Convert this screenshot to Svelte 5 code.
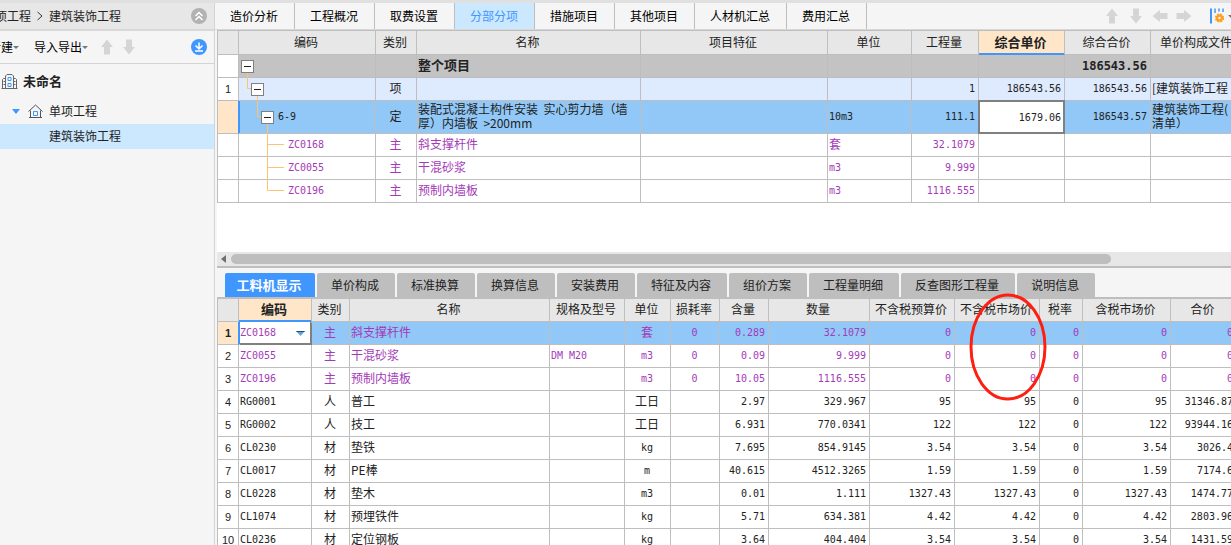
<script lang="ts">
	type Align = 'left' | 'center' | 'right'

	type Column = {
		label: string
		width: number
		align: Align
		active?: boolean
	}

	type BudgetRow = {
		no: string
		kind: 'total' | 'group' | 'selected' | 'material'
		box?: number
		height: number
		lines: string
		code_indent: number
		cells: string[]
	}

	const PAGE_TABS = ['造价分析', '工程概况', '取费设置', '分部分项', '措施项目', '其他项目', '人材机汇总', '费用汇总']
	const DETAIL_TABS = [
		'工料机显示',
		'单价构成',
		'标准换算',
		'换算信息',
		'安装费用',
		'特征及内容',
		'组价方案',
		'工程量明细',
		'反查图形工程量',
		'说明信息',
	]

	let page_tab = $state('分部分项')
	let detail_tab = $state('工料机显示')
	let unit_price = $state('1679.06')

	const BUDGET_COLUMNS: Column[] = [
		{ label: '编码', width: 137, align: 'left' },
		{ label: '类别', width: 41, align: 'center' },
		{ label: '名称', width: 224, align: 'left' },
		{ label: '项目特征', width: 187, align: 'left' },
		{ label: '单位', width: 84, align: 'left' },
		{ label: '工程量', width: 67, align: 'right' },
		{ label: '综合单价', width: 86, align: 'right', active: true },
		{ label: '综合合价', width: 86, align: 'right' },
		{ label: '单价构成文件', width: 93, align: 'left' },
	]
	const PRICE_INDEX = 6

	// box: left edge of the expander, lines: tree connector path inside the code cell
	const BUDGET_ROWS: BudgetRow[] = [
		{
			no: '',
			kind: 'total',
			box: 2,
			height: 22,
			lines: 'M8.5 16V23',
			code_indent: 18,
			cells: ['', '', '整个项目', '', '', '', '', '186543.56', ''],
		},
		{
			no: '1',
			kind: 'group',
			box: 12,
			height: 22,
			lines: 'M8.5 0V10.5H12M18.5 16V23',
			code_indent: 28,
			cells: ['', '项', '', '', '', '1', '186543.56', '186543.56', '[建筑装饰工程'],
		},
		{
			no: '',
			kind: 'selected',
			box: 22,
			height: 32,
			lines: 'M18.5 0V15.5H22M28.5 22V33',
			code_indent: 39,
			cells: [
				'6-9',
				'定',
				'装配式混凝土构件安装\u00a0\u00a0实心剪力墙（墙\n厚）内墙板\u00a0\u00a0>200mm',
				'',
				'10m3',
				'111.1',
				'1679.06',
				'186543.57',
				'建筑装饰工程(\n清单）',
			],
		},
		{
			no: '',
			kind: 'material',
			height: 22,
			lines: 'M28.5 0V23M28.5 10.5H45',
			code_indent: 49,
			cells: ['ZC0168', '主', '斜支撑杆件', '', '套', '32.1079', '', '', ''],
		},
		{
			no: '',
			kind: 'material',
			height: 22,
			lines: 'M28.5 0V23M28.5 10.5H45',
			code_indent: 49,
			cells: ['ZC0055', '主', '干混砂浆', '', 'm3', '9.999', '', '', ''],
		},
		{
			no: '',
			kind: 'material',
			height: 22,
			lines: 'M28.5 0V10.5H45',
			code_indent: 49,
			cells: ['ZC0196', '主', '预制内墙板', '', 'm3', '1116.555', '', '', ''],
		},
	]

	const DETAIL_COLUMNS: Column[] = [
		{ label: '编码', width: 73, align: 'left', active: true },
		{ label: '类别', width: 38, align: 'center' },
		{ label: '名称', width: 200, align: 'left' },
		{ label: '规格及型号', width: 75, align: 'left' },
		{ label: '单位', width: 46, align: 'center' },
		{ label: '损耗率', width: 49, align: 'center' },
		{ label: '含量', width: 49, align: 'right' },
		{ label: '数量', width: 101, align: 'right' },
		{ label: '不含税预算价', width: 85, align: 'right' },
		{ label: '不含税市场价', width: 85, align: 'right' },
		{ label: '税率', width: 43, align: 'right' },
		{ label: '含税市场价', width: 88, align: 'right' },
		{ label: '合价', width: 66, align: 'right' },
	]

	const DETAIL_ROWS: string[][] = [
		['ZC0168', '主', '斜支撑杆件', '', '套', '0', '0.289', '32.1079', '0', '0', '0', '0', '0'],
		['ZC0055', '主', '干混砂浆', 'DM M20', 'm3', '0', '0.09', '9.999', '0', '0', '0', '0', '0'],
		['ZC0196', '主', '预制内墙板', '', 'm3', '0', '10.05', '1116.555', '0', '0', '0', '0', '0'],
		['RG0001', '人', '普工', '', '工日', '', '2.97', '329.967', '95', '95', '0', '95', '31346.87'],
		['RG0002', '人', '技工', '', '工日', '', '6.931', '770.0341', '122', '122', '0', '122', '93944.16'],
		['CL0230', '材', '垫铁', '', 'kg', '', '7.695', '854.9145', '3.54', '3.54', '0', '3.54', '3026.4'],
		['CL0017', '材', 'PE棒', '', 'm', '', '40.615', '4512.3265', '1.59', '1.59', '0', '1.59', '7174.6'],
		['CL0228', '材', '垫木', '', 'm3', '', '0.01', '1.111', '1327.43', '1327.43', '0', '1327.43', '1474.77'],
		['CL1074', '材', '预埋铁件', '', 'kg', '', '5.71', '634.381', '4.42', '4.42', '0', '4.42', '2803.96'],
		['CL0236', '材', '定位钢板', '', 'kg', '', '3.64', '404.404', '3.54', '3.54', '0', '3.54', '1431.59'],
	]

	const is_latin = (text: string) => /^[\x20-\x7e]+$/.test(text)
</script>

{#snippet arrow(angle: number, label: string)}
	<button class="icon-button" aria-label={label}>
		<svg width="16" height="16" viewBox="0 0 16 16" aria-hidden="true">
			<path d="M8 0.5L14 8H11V15.5H5V8H2Z" fill="#d5d5d5" transform="rotate({angle} 8 8)" />
		</svg>
	</button>
{/snippet}

<div class="app">
	<aside class="sidebar">
		<nav class="crumbs">
			<span class="crumb-first">项工程</span>
			<svg width="6" height="10" viewBox="0 0 6 10" aria-hidden="true">
				<path d="M0.5 1L5 5L0.5 9" fill="none" stroke="#333" />
			</svg>
			<span>建筑装饰工程</span>
			<button class="icon-button push" aria-label="收起">
				<svg width="16" height="16" viewBox="0 0 16 16" aria-hidden="true">
					<circle cx="8" cy="8" r="8" fill="#b2b2b2" />
					<path d="M4.5 8L8 4.5L11.5 8M4.5 12L8 8.5L11.5 12" fill="none" stroke="#fff" stroke-width="1.5" />
				</svg>
			</button>
		</nav>
		<div class="side-tools">
			<button class="menu-button">新建<i class="caret"></i></button>
			<button class="menu-button">导入导出<i class="caret"></i></button>
			<div class="side-arrows">
				{@render arrow(0, '上移')}
				{@render arrow(180, '下移')}
			</div>
			<button class="icon-button push" aria-label="下载">
				<svg width="16" height="16" viewBox="0 0 16 16" aria-hidden="true">
					<circle cx="8" cy="8" r="8" fill="#4096ff" />
					<path d="M8 3.5V9.5M4.5 6.5L8 10L11.5 6.5M4 12H12" fill="none" stroke="#fff" stroke-width="1.5" />
				</svg>
			</button>
		</div>
		<ul class="tree">
			<li class="root">
				<svg width="17" height="17" viewBox="0 0 17 17" aria-hidden="true">
					<path
						d="M4.5 15V3L6 1.5H11L12.5 3V15M4.5 5.5H2.5L1.5 6.5V15M12.5 5.5H14.5L15.5 6.5V15M0.5 15.5H16.5M2.5 8.5H4M2.5 11.5H4M13 8.5H14.5M13 11.5H14.5"
						fill="none"
						stroke="#666"
					/>
					<path d="M7 4.5H10V7.5H7ZM7 10.5H10V13.5H7Z" fill="none" stroke="#4096ff" />
				</svg>
				未命名
			</li>
			<li class="branch">
				<svg width="8" height="5" viewBox="0 0 8 5" aria-hidden="true">
					<path d="M0 0H8L4 5Z" fill="#4096ff" />
				</svg>
				<svg width="15" height="15" viewBox="0 0 15 15" aria-hidden="true">
					<path d="M0.5 7.5L7.5 1L14.5 7.5M2.5 6.5V13.5M12.5 6.5V13.5M1 13.5H14" fill="none" stroke="#555" />
					<path d="M5.5 7.5H9.5V11.5H5.5Z" fill="none" stroke="#4096ff" />
				</svg>
				单项工程
			</li>
			<li class="leaf">建筑装饰工程</li>
		</ul>
	</aside>

	<main class="main">
		<div class="page-bar">
			{#each PAGE_TABS as tab (tab)}
				<button class="page-tab" class:current={tab === page_tab} onclick={() => (page_tab = tab)}>{tab}</button>
			{/each}
			<div class="page-tools">
				{@render arrow(0, '上移')}
				{@render arrow(180, '下移')}
				{@render arrow(270, '左移')}
				{@render arrow(90, '右移')}
			</div>
			<button class="icon-button settings" aria-label="列设置">
				<svg width="14" height="16" viewBox="0 0 14 16" aria-hidden="true">
					<path d="M1 0.5V15.5" stroke="#4096ff" stroke-width="2" />
					<path d="M5 0.5V5M9 0.5V3.5M13 0.5V4" stroke="#4096ff" stroke-width="1.5" />
					<circle cx="9.5" cy="10" r="3.5" fill="#ff9d1e" />
					<circle
						cx="9.5"
						cy="10"
						r="3.8"
						fill="none"
						stroke="#ff9d1e"
						stroke-width="1.6"
						stroke-dasharray="2 1"
					/>
					<circle cx="9.5" cy="10" r="1.3" fill="#f5f5f5" />
				</svg>
				<i class="caret"></i>
			</button>
		</div>

		<section class="budget">
			<table class="grid budget-grid">
				<colgroup>
					<col style="width: 21px" />
					{#each BUDGET_COLUMNS as col (col.label)}
						<col style="width: {col.width}px" />
					{/each}
				</colgroup>
				<thead>
					<tr>
						<th></th>
						{#each BUDGET_COLUMNS as col (col.label)}
							<th class:active={col.active}>{col.label}</th>
						{/each}
					</tr>
				</thead>
				<tbody>
					{#each BUDGET_ROWS as row, r (r)}
						<tr class={row.kind}>
							<td class="row-no">{row.no}</td>
							{#each row.cells as cell, i (i)}
								{#if i === 0}
									<td class="code">
										<div class="branch-cell">
											<svg width="60" height={row.height} aria-hidden="true">
												<path d={row.lines} fill="none" stroke="#ffc36e" />
											</svg>
											{#if row.box !== undefined}
												<button class="expander" style="margin-left: {row.box}px" aria-label="折叠"></button>
											{/if}
											<span class="latin" style="margin-left: {row.code_indent}px">{cell}</span>
										</div>
									</td>
								{:else if row.kind === 'selected' && i === PRICE_INDEX}
									<td class="editing">
										<input class="price-input latin" aria-label="综合单价" bind:value={unit_price} />
									</td>
								{:else}
									<td class={BUDGET_COLUMNS[i].align} class:latin={is_latin(cell)}>{cell}</td>
								{/if}
							{/each}
						</tr>
					{/each}
				</tbody>
			</table>
		</section>

		<div class="scrollbar">
			<svg width="5" height="8" viewBox="0 0 5 8" aria-hidden="true">
				<path d="M5 0V8L0 4Z" fill="#6e6e76" />
			</svg>
			<div class="track"><div class="thumb"></div></div>
		</div>

		<section class="detail">
			<div class="detail-tabs">
				{#each DETAIL_TABS as tab (tab)}
					<button class="detail-tab" class:current={tab === detail_tab} onclick={() => (detail_tab = tab)}>
						{tab}
					</button>
				{/each}
			</div>
			<table class="grid detail-grid">
				<colgroup>
					<col style="width: 21px" />
					{#each DETAIL_COLUMNS as col (col.label)}
						<col style="width: {col.width}px" />
					{/each}
				</colgroup>
				<thead>
					<tr>
						<th></th>
						{#each DETAIL_COLUMNS as col (col.label)}
							<th class:active={col.active}>{col.label}</th>
						{/each}
					</tr>
				</thead>
				<tbody>
					{#each DETAIL_ROWS as row, r (r)}
						<tr class:selected={r === 0} class:material={row[1] === '主'}>
							<td class="row-no">{r + 1}</td>
							{#each row as cell, i (i)}
								{#if r === 0 && i === 0}
									<td class="editing">
										<div class="code-picker">
											<select class="latin" aria-label="编码">
												<option>{cell}</option>
											</select>
											<svg width="9" height="5" viewBox="0 0 9 5" aria-hidden="true">
												<path d="M0 0H9L4.5 5Z" fill="#5ba3d9" />
												<path d="M0 0H9L8 1H1Z" fill="#1f4e79" />
											</svg>
										</div>
									</td>
								{:else}
									<td class={DETAIL_COLUMNS[i].align} class:latin={is_latin(cell)}>{cell}</td>
								{/if}
							{/each}
						</tr>
					{/each}
				</tbody>
			</table>
			<!-- Hand-drawn mark around the untaxed market price -->
			<svg class="mark" width="78" height="108" viewBox="0 0 78 108" aria-hidden="true">
				<ellipse cx="39" cy="54" rx="37" ry="52" fill="none" stroke="#ff1e10" stroke-width="3" />
			</svg>
		</section>
	</main>
</div>

<style>
	:global(body) {
		background: #f5f5f5;
	}

	.app {
		display: flex;
		height: 100vh;
		box-sizing: border-box;
		border-top: 3px solid #e0e0e0;
		overflow: hidden;
		background: #f5f5f5;
		color: #222;
		font-family: 'Noto Sans CJK SC', sans-serif;
		font-size: 12px;
		line-height: 14px;
	}

	button,
	input,
	select {
		margin: 0;
		padding: 0;
		border: 0;
		border-radius: 0;
		background: none;
		color: inherit;
		font: inherit;
	}

	.icon-button {
		display: flex;
		align-items: center;
	}

	.push {
		margin-left: auto;
	}

	.caret {
		border: 3px solid transparent;
		border-top-color: #777;
		border-bottom: 0;
	}

	/* Sidebar */
	.sidebar {
		flex: 0 0 214px;
		border-right: 1px solid #d4d4d4;
		overflow: hidden;
	}

	.crumbs {
		display: flex;
		align-items: center;
		gap: 6px;
		height: 26px;
		padding-right: 7px;
		border-bottom: 2px solid #d8d8d8;
		background: #e7e7e7;
		white-space: nowrap;
	}

	.crumb-first {
		margin-left: -5px;
	}

	.side-tools {
		display: flex;
		align-items: center;
		height: 32px;
		padding-right: 7px;
		border-bottom: 1px solid #d4d4d4;
		color: #000;
	}

	.menu-button {
		display: flex;
		align-items: center;
		margin-right: 15px;
		white-space: nowrap;
	}

	.menu-button:first-child {
		margin-left: -11px;
	}

	.menu-button + .side-arrows {
		display: flex;
		gap: 6px;
		margin-left: -4px;
	}

	.tree {
		margin: 0;
		padding: 0;
		list-style: none;
	}

	.tree li {
		display: flex;
		align-items: center;
	}

	.tree .root {
		gap: 5px;
		height: 34px;
		padding-left: 1px;
		font-size: 13px;
		font-weight: bold;
	}

	.tree .branch {
		gap: 8px;
		height: 26px;
		padding-left: 12px;
	}

	.tree .branch svg + svg {
		margin-right: -2px;
	}

	.tree .leaf {
		height: 23px;
		padding: 0 0 2px 49px;
		background: #cce8ff;
	}

	/* Page tabs */
	.main {
		display: flex;
		flex: 1;
		flex-direction: column;
		min-width: 0;
	}

	.page-bar {
		display: flex;
		flex: 0 0 26px;
		border-bottom: 1px solid #d8d8d8;
		overflow: hidden;
	}

	.page-tab {
		flex: none;
		padding: 0 16px 0 15px;
		border-right: 1px solid #bebebe;
		color: #000;
	}

	.page-tab.current {
		background: #cce8ff;
		color: #4096ff;
	}

	.page-tools {
		display: flex;
		gap: 8px;
		margin-left: auto;
		margin-right: 18px;
	}

	.settings {
		flex: none;
		gap: 4px;
		margin-right: -3px;
	}

	/* Grids */
	.budget {
		flex: none;
		min-height: 222px;
		margin-left: 2px;
		overflow: hidden;
		background: #fff;
	}

	.grid {
		table-layout: fixed;
		min-width: 100%;
		border-spacing: 0;
		border-top: 1px solid #bebebe;
		border-left: 1px solid #bebebe;
		background: #fff;
	}

	.budget-grid {
		width: 1027px;
	}

	.detail-grid {
		width: 1020px;
	}

	.grid th,
	.grid td {
		box-sizing: border-box;
		height: 23px;
		padding: 0 2px 2px 1px;
		border-right: 1px solid #bebebe;
		border-bottom: 1px solid #bebebe;
		overflow: hidden;
		white-space: pre;
	}

	.grid th {
		padding: 0 2px 2px 0;
		background: #e7e7e7;
		font-weight: normal;
	}

	.budget-grid th {
		height: 24px;
	}

	.grid th.active {
		border-bottom-color: #4096ff;
		background: #ffe6c8;
		box-shadow: inset 0 -1px #4096ff;
		font-size: 13px;
		font-weight: bold;
	}

	.left {
		text-align: left;
	}

	.center {
		text-align: center;
	}

	.grid td.right {
		padding-right: 3px;
		text-align: right;
	}

	.latin {
		font-family: 'DejaVu Sans Mono', monospace;
		font-size: 10px;
	}

	.grid td.latin {
		padding-bottom: 0;
	}

	.grid .row-no {
		padding: 0;
		font-family: 'Liberation Sans', sans-serif;
		font-size: 11px;
		text-align: center;
	}

	.grid td.code,
	.grid td.editing {
		padding: 0;
		overflow: visible;
	}

	.total td {
		background: #c3c3c3;
		font-size: 13px;
		font-weight: bold;
	}

	.total td.latin {
		font-size: 12px;
	}

	.total .row-no {
		background: #fff;
	}

	.group td:not(.row-no) {
		background: #deeafe;
	}

	.material td:not(.row-no) {
		color: #a43ab8;
	}

	.selected td {
		background: #91c8f7;
	}

	.budget-grid .selected td {
		height: 33px;
	}

	.selected .row-no {
		border-right-color: #4096ff;
		background: #ffe6c8;
		font-weight: bold;
	}

	.selected .row-no + td {
		box-shadow: inset 1px 0 #4096ff;
	}

	.selected td.editing {
		background: #fff;
	}

	.branch-cell {
		display: grid;
		align-items: center;
	}

	.branch-cell > * {
		grid-area: 1 / 1;
	}

	.branch-cell svg {
		display: block;
		overflow: visible;
	}

	.expander {
		width: 13px;
		height: 13px;
		border: 1px solid #808080;
		background: linear-gradient(#222, #222) center / 7px 1px no-repeat #fff;
	}

	.price-input {
		position: relative;
		display: block;
		box-sizing: border-box;
		width: 100%;
		height: 32px;
		padding-right: 2px;
		border: 1px solid #808080;
		box-shadow: 0 0 0 1px #808080;
		text-align: right;
	}

	.code-picker {
		position: relative;
		display: grid;
		align-items: center;
		height: 22px;
		border-left: 1px solid #4096ff;
		border-right: 1px solid #808080;
		box-sizing: border-box;
		box-shadow:
			1px 1px #808080,
			inset 0 -1px #808080;
	}

	.code-picker > * {
		grid-area: 1 / 1;
	}

	.code-picker select {
		appearance: none;
	}

	.code-picker svg {
		justify-self: end;
		margin-right: 5px;
		pointer-events: none;
	}

	.scrollbar {
		display: flex;
		flex: 0 0 14px;
		align-items: center;
		gap: 5px;
		margin-left: 2px;
		padding-left: 4px;
		border-bottom: 2px solid #bebebe;
		background: #e7e7e7;
	}

	.track {
		flex: 1;
	}

	.thumb {
		width: 88%;
		height: 10px;
		border-radius: 5px;
		background: #bebebe;
	}

	/* Detail pane */
	.detail {
		position: relative;
		flex: 1;
		min-height: 0;
		padding: 5px 0 0 2px;
		overflow: hidden;
	}

	.detail-tabs {
		display: flex;
		gap: 2px;
		padding-left: 8px;
	}

	.detail-tab {
		flex: none;
		height: 24px;
		padding: 0 16px 0 14px;
		border-radius: 2px 2px 0 0;
		background: #bebebe;
	}

	.detail-tab.current {
		min-width: 90px;
		padding: 0 13px 0 11px;
		background: #4096ff;
		color: #fff;
		font-size: 13px;
		font-weight: bold;
	}

	.detail-grid {
		border-top-width: 2px;
	}

	.mark {
		position: absolute;
		top: 25px;
		left: 754px;
		pointer-events: none;
	}
</style>
